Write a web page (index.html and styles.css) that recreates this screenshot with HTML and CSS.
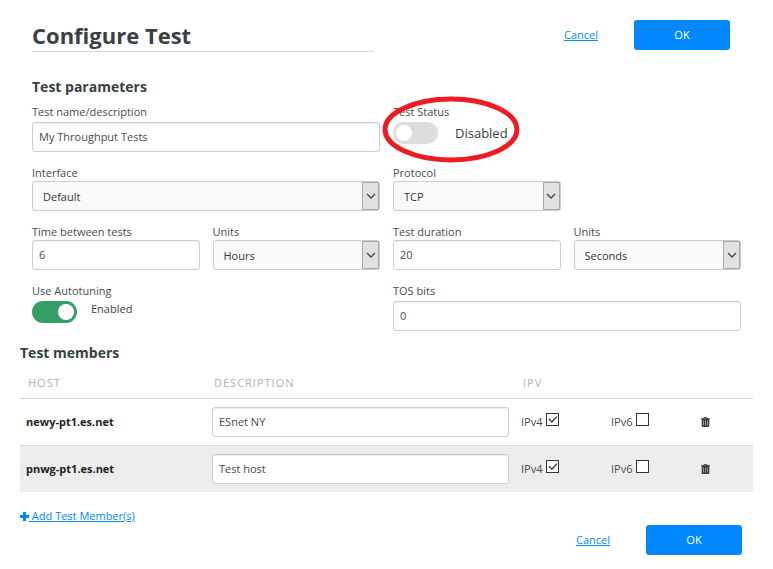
FILE: index.html
```html
<!DOCTYPE html>
<html lang="en">
<head>
<meta charset="utf-8">
<title>Configure Test</title>
<link rel="stylesheet" href="styles.css">
</head>
<body>
<svg class="sprite" aria-hidden="true">
  <symbol id="chevron" viewBox="0 0 10 6"><path d="M1 1l4 4 4-4" fill="none" stroke="#444" stroke-width="1.3"/></symbol>
  <symbol id="trash" viewBox="0 0 9 10"><path fill="#333a40" fill-rule="evenodd" d="M3 0h3l.6 1.2H9v1H8.300V9q0 1-1 1H1.700q-1 0-1-1V2.200H0v-1h2.400zM3.400.700l-.2.500h2.600L5.600.700zM2.400 3.400v5h.5v-5zM4.250 3.400v5h.5v-5zM6.100 3.400v5h.5v-5z"/></symbol>
</svg>
<form class="page">
  <header class="header">
    <h1 class="title">Configure Test</h1>
    <div class="actions">
      <a class="link" href="#">Cancel</a>
      <button class="ok" type="button">OK</button>
    </div>
  </header>

  <section class="parameters">
    <h2 class="heading">Test parameters</h2>
    <div class="fields">
      <div class="field wide roomy">
        <label for="name">Test name/description</label>
        <input class="control" id="name" type="text" value="My Throughput Tests">
      </div>
      <div class="field wide roomy marked">
        <label for="status">Test Status</label>
        <div class="switch">
          <input class="toggle" id="status" type="checkbox" role="switch">
          <span class="state large">Disabled</span>
        </div>
        <svg class="marker" viewBox="0 0 136 66" aria-hidden="true"><ellipse cx="68" cy="33" rx="65" ry="30" fill="none" stroke="#ed1c24" stroke-width="5"/></svg>
      </div>

      <div class="field wide">
        <label for="interface">Interface</label>
        <div class="picker"><select class="control" id="interface"><option>Default</option></select><span class="arrow"><svg><use href="#chevron"/></svg></span></div>
      </div>
      <div class="field">
        <label for="protocol">Protocol</label>
        <div class="picker"><select class="control" id="protocol"><option>TCP</option></select><span class="arrow"><svg><use href="#chevron"/></svg></span></div>
      </div>

      <div class="field first">
        <label for="interval">Time between tests</label>
        <input class="control" id="interval" type="text" value="6">
      </div>
      <div class="field">
        <label for="interval-units">Units</label>
        <div class="picker"><select class="control" id="interval-units"><option>Hours</option></select><span class="arrow"><svg><use href="#chevron"/></svg></span></div>
      </div>
      <div class="field">
        <label for="duration">Test duration</label>
        <input class="control" id="duration" type="text" value="20">
      </div>
      <div class="field">
        <label for="duration-units">Units</label>
        <div class="picker"><select class="control" id="duration-units"><option>Seconds</option></select><span class="arrow"><svg><use href="#chevron"/></svg></span></div>
      </div>

      <div class="field wide roomy">
        <label for="autotuning">Use Autotuning</label>
        <div class="switch">
          <input class="toggle" id="autotuning" type="checkbox" role="switch" checked>
          <span class="state">Enabled</span>
        </div>
      </div>
      <div class="field wide roomy">
        <label for="tos">TOS bits</label>
        <input class="control" id="tos" type="text" value="0">
      </div>
    </div>
  </section>

  <section class="members">
    <h2 class="heading">Test members</h2>
    <table class="table">
      <colgroup><col class="col-host"><col class="col-description"><col class="col-ip"><col class="col-ip"><col class="col-remove"></colgroup>
      <thead>
        <tr><th scope="col">HOST</th><th scope="col">DESCRIPTION</th><th scope="col" colspan="3">IPV</th></tr>
      </thead>
      <tbody>
        <tr>
          <td class="host">newy-pt1.es.net</td>
          <td><input class="control" type="text" aria-label="Description of newy-pt1.es.net" value="ESnet NY"></td>
          <td><label class="check">IPv4<input type="checkbox" checked></label></td>
          <td><label class="check">IPv6<input type="checkbox"></label></td>
          <td><button class="remove" type="button" aria-label="Remove newy-pt1.es.net"><svg><use href="#trash"/></svg></button></td>
        </tr>
        <tr>
          <td class="host">pnwg-pt1.es.net</td>
          <td><input class="control" type="text" aria-label="Description of pnwg-pt1.es.net" value="Test host"></td>
          <td><label class="check">IPv4<input type="checkbox" checked></label></td>
          <td><label class="check">IPv6<input type="checkbox"></label></td>
          <td><button class="remove" type="button" aria-label="Remove pnwg-pt1.es.net"><svg><use href="#trash"/></svg></button></td>
        </tr>
      </tbody>
    </table>
    <a class="add" href="#"><svg viewBox="0 0 9 9" aria-hidden="true"><path d="M3 0h3v3h3v3H6v3H3V6H0V3h3z" fill="#08f"/></svg><span class="link">&nbsp;Add Test Member(s)</span></a>
  </section>

  <footer class="actions bottom">
    <a class="link" href="#">Cancel</a>
    <button class="ok" type="button">OK</button>
  </footer>
</form>
</body>
</html>
```
FILE: styles.css
```css
* { box-sizing: border-box; }

body {
  margin: 0;
  background: #fff;
  color: #444c53;
  font: 11px/16px "Open Sans", "Noto Sans", sans-serif;
}

input, select, button { font: inherit; color: inherit; margin: 0; }

.sprite { display: none; }

.page { padding: 20px 20px 14px; }

/* Header and action bars */
.header {
  display: flex;
  justify-content: space-between;
  padding: 0 23px 0 12px;
}

.title {
  width: 49%;
  margin: 0;
  border-bottom: 1px solid #d8d8d8;
  color: #383f45;
  font-size: 22px;
  line-height: 31px;
}

.actions {
  display: flex;
  align-items: center;
  justify-content: flex-end;
  gap: 36px;
  height: 30px;
}

.bottom { padding-right: 11px; }

.link { color: #08f; text-decoration: underline; }

.ok {
  width: 96px;
  height: 30px;
  padding: 0;
  border: 0;
  border-radius: 3px;
  background: #08f;
  color: #fff;
}

.heading {
  margin: 0;
  color: #383f45;
  font-size: 14px;
  line-height: 20px;
}

/* Parameters */
.parameters { padding: 25px 12px 0; }

.fields {
  display: grid;
  grid-template-columns: repeat(4, minmax(0, 1fr));
  gap: 13px;
  margin-top: 7px;
}

.field { display: flex; flex-direction: column; }
.wide { grid-column: span 2; }
.first { grid-column-start: 1; }
.roomy { gap: 2px; }

.control {
  display: block;
  width: 100%;
  height: 30px;
  padding: 0 6px 1px;
  border: 1px solid #ccc;
  border-radius: 3px;
  background: #fff;
  box-shadow: inset 0 1px 1px rgba(0, 0, 0, .07);
}

.picker { position: relative; }

.picker .control {
  appearance: none;
  padding: 2px 24px 0 10px;
  background: #fafafa;
  box-shadow: none;
  color: #333;
}

.arrow {
  position: absolute;
  top: 1px;
  right: 1px;
  bottom: 1px;
  display: flex;
  align-items: center;
  justify-content: center;
  width: 17px;
  border: 1px solid #aaa;
  background: #e1e1e1;
  pointer-events: none;
}

.arrow svg { width: 10px; height: 6px; }

.switch { display: flex; gap: 14px; }

.toggle {
  appearance: none;
  display: flex;
  width: 45px;
  height: 22px;
  padding: 3px;
  border-radius: 11px;
  background: #ddd;
}

.toggle::before {
  content: "";
  width: 16px;
  height: 16px;
  border-radius: 50%;
  background: #fff;
}

.toggle:checked { justify-content: flex-end; background: #339f66; }

.state { color: #383f45; }
.large { padding-left: 3px; font-size: 13px; line-height: 22px; }

.marked { position: relative; }

.marker {
  position: absolute;
  top: -8px;
  left: -11px;
  width: 138px;
  height: 67px;
  pointer-events: none;
}

/* Members */
.members { padding-top: 12px; }

.table {
  width: 100%;
  margin-top: 5px;
  border-collapse: collapse;
  table-layout: fixed;
}

.col-host { width: 186px; }
.col-ip { width: 90px; }
.col-remove { width: 58px; }

.table th {
  height: 30px;
  padding: 0 8px;
  color: #adb3b8;
  font-weight: 400;
  letter-spacing: 1px;
  text-align: left;
}

.table td {
  height: 47px;
  padding: 0 6px;
  border-top: 1px solid #d8d8d8;
}

.table tbody tr:nth-child(even) { background: #ededed; }

.table .host { color: #222; font-weight: 700; }

.check { display: flex; align-items: center; gap: 4px; }

.check input {
  appearance: none;
  display: flex;
  align-items: center;
  justify-content: center;
  width: 13px;
  height: 13px;
  margin-bottom: 4px;
  border: 1px solid #333;
  background: #fff;
}

.check input:checked::before {
  content: "";
  width: 9px;
  height: 7px;
  background: #333;
  clip-path: polygon(0 45%, 10% 32%, 36% 70%, 90% 0, 100% 12%, 38% 100%);
}

.remove {
  display: flex;
  padding: 0;
  border: 0;
  background: none;
}

.remove svg { width: 9px; height: 10px; }

.add {
  display: inline-flex;
  align-items: center;
  margin: 16px 0 0;
  text-decoration: none;
}

.add svg { width: 9px; height: 9px; }
```
